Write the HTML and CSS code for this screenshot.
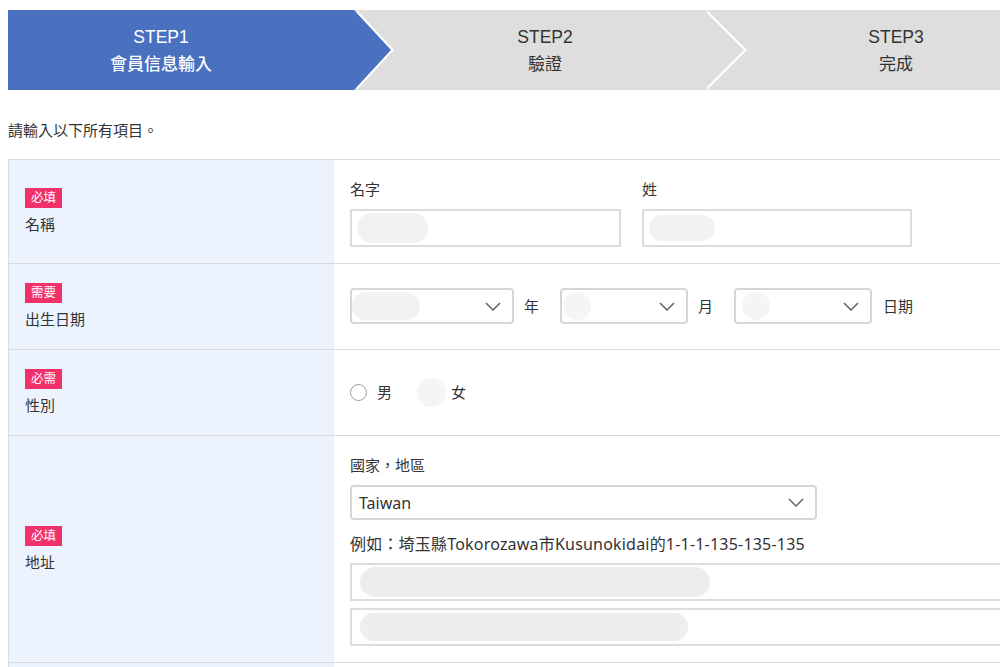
FILE: index.html
```html
<!DOCTYPE html>
<html lang="zh-Hant">
<head>
<meta charset="utf-8">
<title>會員信息輸入</title>
<link rel="stylesheet" href="styles.css">
</head>
<body>
<div class="page">
  <ol class="steps">
    <li class="step step-1"><span class="step-num">STEP1</span><span class="step-name">會員信息輸入</span></li>
    <li class="step step-2"><span class="step-num">STEP2</span><span class="step-name">驗證</span></li>
    <li class="step step-3"><span class="step-num">STEP3</span><span class="step-name">完成</span></li>
  </ol>

  <p class="lead">請輸入以下所有項目。</p>

  <div class="form">
    <div class="row">
      <div class="head"><span class="badge">必填</span><span class="head-label">名稱</span></div>
      <div class="body body-name">
        <div class="name-field first">
          <span class="field-label">名字</span>
          <span class="text-input"><span class="blob blob-first"></span></span>
        </div>
        <div class="name-field last">
          <span class="field-label">姓</span>
          <span class="text-input"><span class="blob blob-last"></span></span>
        </div>
      </div>
    </div>

    <div class="row">
      <div class="head"><span class="badge">需要</span><span class="head-label">出生日期</span></div>
      <div class="body body-inline">
        <span class="select sel-year"><span class="blob blob-year"></span><svg class="chev" viewBox="0 0 16 9"><polyline points="1,1 8,8 15,1"/></svg></span>
        <span class="unit">年</span>
        <span class="select sel-month"><span class="blob blob-month"></span><svg class="chev" viewBox="0 0 16 9"><polyline points="1,1 8,8 15,1"/></svg></span>
        <span class="unit">月</span>
        <span class="select sel-day"><span class="blob blob-day"></span><svg class="chev" viewBox="0 0 16 9"><polyline points="1,1 8,8 15,1"/></svg></span>
        <span class="unit unit-last">日期</span>
      </div>
    </div>

    <div class="row">
      <div class="head"><span class="badge">必需</span><span class="head-label">性別</span></div>
      <div class="body body-inline">
        <span class="radio"></span><span class="radio-label">男</span>
        <span class="blob blob-radio"></span><span class="radio-label radio-label-f">女</span>
      </div>
    </div>

    <div class="row">
      <div class="head"><span class="badge">必填</span><span class="head-label">地址</span></div>
      <div class="body body-address">
        <span class="field-label">國家，地區</span>
        <span class="select sel-country"><span class="country-value">Taiwan</span><svg class="chev" viewBox="0 0 16 9"><polyline points="1,1 8,8 15,1"/></svg></span>
        <span class="hint">例如：埼玉縣Tokorozawa市Kusunokidai的1-1-1-135-135-135</span>
        <span class="text-input addr"><span class="blob blob-addr1"></span></span>
        <span class="text-input addr addr-2"><span class="blob blob-addr2"></span></span>
      </div>
    </div>

    <div class="row row-next">
      <div class="head"></div>
      <div class="body"></div>
    </div>
  </div>
</div>
</body>
</html>
```

FILE: styles.css
```css
html, body {
  margin: 0;
  padding: 0;
  background: #fff;
}

body {
  font-family: "Noto Sans", "Noto Sans CJK TC", sans-serif;
  color: #333;
  overflow: hidden;
}

.page {
  width: 992px;
  padding: 10px 0 0 8px;
  overflow: hidden;
}

/* ---------- step bar ---------- */
.steps {
  list-style: none;
  margin: 0;
  padding: 0;
  display: flex;
  height: 80px;
  background: #dedede;
  overflow: hidden;
  font-family: "Liberation Sans", "Noto Sans CJK TC", sans-serif;
  font-size: 17.5px;
  line-height: 26px;
  color: #333;
}

.step {
  position: relative;
  flex: 0 0 auto;
  box-sizing: border-box;
  display: flex;
  flex-direction: column;
  align-items: center;
  justify-content: center;
}

.step-name {
  font-family: "Noto Sans CJK TC", sans-serif;
  font-size: 17px;
}

.step-1 {
  width: 346px;
  padding-right: 40px;
  background: #4a71c0;
  color: #fff;
  z-index: 3;
}

.step-1 .step-name {
  font-weight: 500;
}

.step-2 {
  width: 350px;
  padding-left: 42px;
  padding-right: 10px;
  z-index: 2;
}

.step-3 {
  width: 340px;
  padding-left: 44px;
  z-index: 1;
}

.step-1::before,
.step-1::after,
.step-2::before,
.step-2::after {
  content: "";
  position: absolute;
  top: 0;
  left: 100%;
  width: 0;
  height: 0;
  border-top: 40px solid transparent;
  border-bottom: 40px solid transparent;
}

.step-1::after { border-left: 37px solid #4a71c0; }
.step-1::before { border-left: 37px solid #fff; margin-left: 3px; }
.step-2::after { border-left: 40px solid #dedede; }
.step-2::before { border-left: 40px solid #fff; margin-left: 3px; }

/* ---------- lead ---------- */
.lead {
  margin: 29px 0 18px;
  font-size: 15px;
  line-height: 22px;
}

/* ---------- form table ---------- */
.form {
  width: 1100px;
  border-top: 1px solid #dadada;
  border-left: 1px solid #dadada;
}

.row {
  display: grid;
  grid-template-columns: 325px 1fr;
  border-bottom: 1px solid #dadada;
}

.row-next {
  min-height: 80px;
}

.head {
  background: #edf3fe;
  padding: 0 16px;
  display: flex;
  flex-direction: column;
  justify-content: center;
  align-items: flex-start;
}

.badge {
  display: block;
  height: 20px;
  line-height: 20px;
  padding: 0 6px;
  background: #f2306a;
  color: #fff;
  font-size: 12.5px;
}

.head-label {
  margin-top: 5px;
  font-size: 15px;
  line-height: 22px;
}

.body {
  padding: 18px 16px 16px;
  font-size: 15px;
  line-height: 22px;
}

.field-label {
  display: block;
  font-size: 15px;
  line-height: 22px;
}

/* name row */
.body-name {
  display: flex;
  gap: 21px;
}

.name-field {
  display: flex;
  flex-direction: column;
}

.name-field.first { width: 271px; }
.name-field.last { width: 270px; }

.text-input {
  box-sizing: border-box;
  display: flex;
  align-items: center;
  height: 38px;
  margin-top: 9px;
  border: 2px solid #dcdcdc;
  background: #fff;
}

.blob {
  display: block;
  flex: 0 0 auto;
  height: 28px;
  border-radius: 15px;
  background: #f2f2f2;
}

.blob-first { width: 71px; height: 30px; margin-left: 5px; }
.blob-last { width: 66px; height: 26px; margin-left: 5px; }

/* inline rows (date, gender) */
.body-inline {
  display: flex;
  align-items: center;
  height: 36px;
  padding: 24px 16px 25px;
}

.select {
  box-sizing: border-box;
  display: flex;
  align-items: center;
  justify-content: space-between;
  height: 36px;
  padding: 0 11px 0 0;
  border: 2px solid #d6d6d6;
  border-radius: 4px;
  background: #fff;
}

.chev {
  width: 16px;
  height: 9px;
  fill: none;
  stroke: #6b6b6b;
  stroke-width: 1.6;
}

.sel-year { width: 164px; }
.sel-month { width: 128px; }
.sel-day { width: 138px; }

.blob-year { width: 68px; margin-left: 0; }
.blob-month { width: 28px; margin-left: 1px; background: #f5f5f5; }
.blob-day { width: 28px; margin-left: 6px; background: #f5f5f5; }

.unit {
  margin: 0 21px 0 10px;
}

.unit-last { margin-right: 0; margin-left: 11px; }

.radio {
  box-sizing: border-box;
  width: 17px;
  height: 17px;
  border: 1.5px solid #9c9c9c;
  border-radius: 50%;
  background: #fff;
}

.radio-label { margin-left: 10px; }

.blob-radio {
  width: 29px;
  height: 29px;
  margin-left: 25px;
  background: #f5f5f5;
}

.radio-label-f { margin-left: 5px; }

/* address row */
.body-address {
  display: flex;
  flex-direction: column;
  align-items: flex-start;
}

.sel-country {
  width: 467px;
  height: 35px;
  margin-top: 9px;
  padding-left: 7px;
  padding-right: 11px;
}

.country-value {
  font-size: 16px;
}

.hint {
  margin-top: 13px;
  font-size: 16px;
  letter-spacing: 0.2px;
}

.text-input.addr {
  width: 100%;
  margin-top: 8px;
}

.text-input.addr-2 { margin-top: 7px; }

.blob-addr1 { width: 350px; height: 30px; margin-left: 8px; background: #ededed; }
.blob-addr2 { width: 328px; height: 28px; margin-left: 8px; background: #eeeeee; }
```
